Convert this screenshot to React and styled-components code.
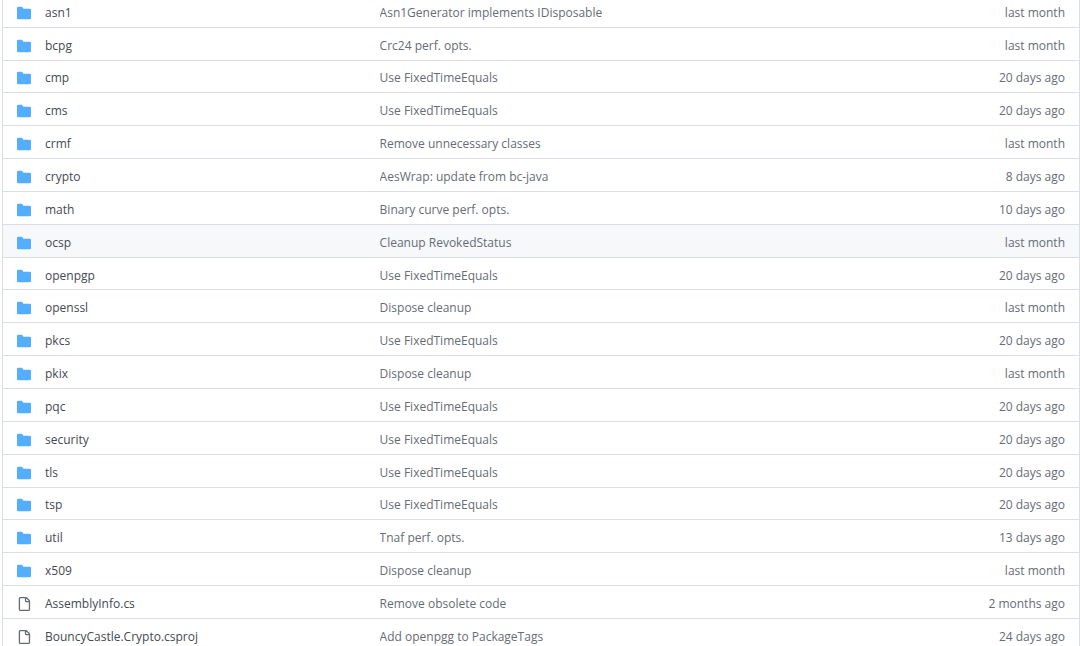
import React from "react";
import styled, { createGlobalStyle } from "styled-components";

const entries = [
  { name: "asn1", message: "Asn1Generator implements IDisposable", age: "last month" },
  { name: "bcpg", message: "Crc24 perf. opts.", age: "last month" },
  { name: "cmp", message: "Use FixedTimeEquals", age: "20 days ago" },
  { name: "cms", message: "Use FixedTimeEquals", age: "20 days ago" },
  { name: "crmf", message: "Remove unnecessary classes", age: "last month" },
  { name: "crypto", message: "AesWrap: update from bc-java", age: "8 days ago" },
  { name: "math", message: "Binary curve perf. opts.", age: "10 days ago" },
  { name: "ocsp", message: "Cleanup RevokedStatus", age: "last month", active: true },
  { name: "openpgp", message: "Use FixedTimeEquals", age: "20 days ago" },
  { name: "openssl", message: "Dispose cleanup", age: "last month" },
  { name: "pkcs", message: "Use FixedTimeEquals", age: "20 days ago" },
  { name: "pkix", message: "Dispose cleanup", age: "last month" },
  { name: "pqc", message: "Use FixedTimeEquals", age: "20 days ago" },
  { name: "security", message: "Use FixedTimeEquals", age: "20 days ago" },
  { name: "tls", message: "Use FixedTimeEquals", age: "20 days ago" },
  { name: "tsp", message: "Use FixedTimeEquals", age: "20 days ago" },
  { name: "util", message: "Tnaf perf. opts.", age: "13 days ago" },
  { name: "x509", message: "Dispose cleanup", age: "last month" },
  { name: "AssemblyInfo.cs", message: "Remove obsolete code", age: "2 months ago", file: true },
  { name: "BouncyCastle.Crypto.csproj", message: "Add openpgg to PackageTags", age: "24 days ago", file: true },
];

const FolderIcon = () => (
  <Icon viewBox="0 0 16 16" $color="#54aeff" aria-label="Directory">
    <path d="M1.5 .9A1.5 1.5 0 0 0 0 2.4v11.2C0 14.5.7 15.2 1.5 15.2h13A1.5 1.5 0 0 0 16 13.7v-9A1.5 1.5 0 0 0 14.5 3.2H7.5a.25.25 0 0 1-.2-.1l-.9-1.4C6.07 1.16 5.55.9 5 .9H1.5Z" />
  </Icon>
);

const FileIcon = () => (
  <Icon viewBox="0 0 16 16" $color="#656d76" aria-label="File">
    <path d="M2 1.75C2 .784 2.784 0 3.75 0h6.586c.464 0 .909.184 1.237.513l2.914 2.914c.329.328.513.773.513 1.237v9.586A1.75 1.75 0 0 1 13.25 16h-9.5A1.75 1.75 0 0 1 2 14.25Zm1.75-.25a.25.25 0 0 0-.25.25v12.5c0 .138.112.25.25.25h9.5a.25.25 0 0 0 .25-.25V6h-2.75A1.75 1.75 0 0 1 9 4.25V1.5Zm6.75.062V4.25c0 .138.112.25.25.25h2.688l-.011-.013-2.914-2.914-.013-.011Z" />
  </Icon>
);

const App = () => {
  return (
    <>
      <GlobalStyle />
      <Files>
        <Table aria-label="Files">
          <tbody>
            {entries.map((entry) => (
              <Row key={entry.name} $active={entry.active}>
                <NameCell>
                  <Name>
                    {entry.file ? <FileIcon /> : <FolderIcon />}
                    <NameLink href="#">{entry.name}</NameLink>
                  </Name>
                </NameCell>
                <Cell>
                  <MessageLink href="#">{entry.message}</MessageLink>
                </Cell>
                <AgeCell>{entry.age}</AgeCell>
              </Row>
            ))}
          </tbody>
        </Table>
      </Files>
    </>
  );
};

const GlobalStyle = createGlobalStyle`
  body {
    margin: 0;
    background: #ffffff;
    overflow: hidden;
  }
`;

/* the list is scrolled part of a row past the top edge */
const Files = styled.main`
  margin: -5px 0 0 2px;
  border: 1px solid #d8dee4;
  border-width: 0 1px;
`;

const Table = styled.table`
  width: 100%;
  height: calc(100vh + 11px);
  table-layout: fixed;
  border-collapse: collapse;
  font-family: "Segoe UI", "Open Sans", "Noto Sans", sans-serif;
  font-size: 12px;
  line-height: 20px;
  color: #656d76;
`;

const Row = styled.tr`
  background: ${(props) => (props.$active ? "#f6f8fa" : "#ffffff")};

  &:hover {
    background: #f6f8fa;
  }
`;

const Cell = styled.td`
  padding: 4px 0 0;
  border-bottom: 1px solid #d8dee4;
  white-space: nowrap;
  overflow: hidden;
  text-overflow: ellipsis;
`;

const NameCell = styled(Cell)`
  width: 35%;
`;

const AgeCell = styled(Cell)`
  width: 15%;
  padding-right: 14px;
  text-align: right;
`;

const Name = styled.div`
  display: flex;
  align-items: flex-end;
  gap: 14px;
  padding-left: 14px;
`;

const Icon = styled.svg`
  flex: none;
  width: 14px;
  height: 14px;
  margin-bottom: 3px;
  fill: ${(props) => props.$color};
`;

const NameLink = styled.a`
  color: #424a53;
  text-decoration: none;

  &:hover {
    text-decoration: underline;
  }
`;

const MessageLink = styled.a`
  color: inherit;
  text-decoration: none;
`;

export default App;
